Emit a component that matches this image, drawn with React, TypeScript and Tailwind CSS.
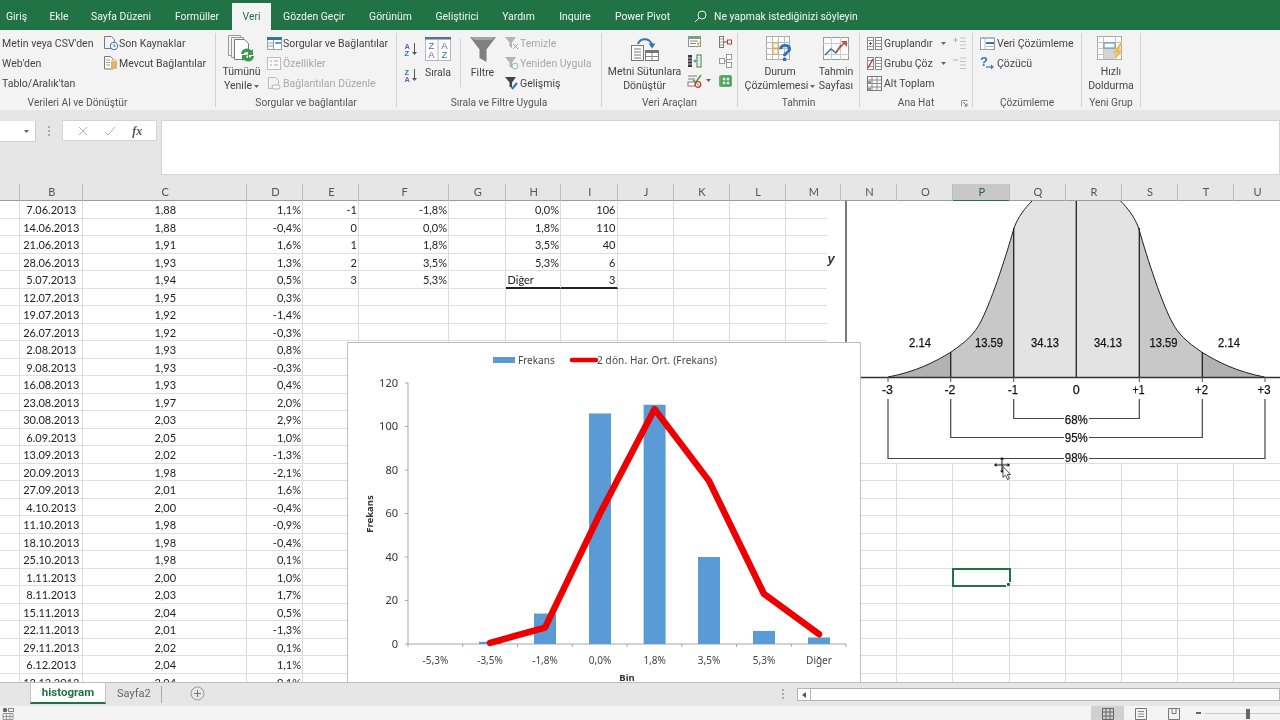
import React from "react";

const COLS =
  "grid grid-cols-[20px_62.5px_164.5px_56px_56px_90px_56.5px_55.5px_56.5px_56px_56px_56px_55.5px_56px_56px_56.5px_56px_56px_56px_56px_47px]";

const S = ({ w, h, children }: { w: number; h: number; children?: React.ReactNode }) => (
  <svg width={w} height={h} viewBox={`0 0 ${w} ${h}`} fill="none" className="block shrink-0">
    {children}
  </svg>
);

const TABS: [string, string][] = [
  ["Giriş", "w-[38px] pl-[6px] text-left"],
  ["Ekle", "w-[42px] text-center"],
  ["Sayfa Düzeni", "w-[82px] text-center"],
  ["Formüller", "w-[70px] text-center"],
  ["Veri", "w-[39px] text-center"],
  ["Gözden Geçir", "w-[86px] text-center"],
  ["Görünüm", "w-[67px] text-center"],
  ["Geliştirici", "w-[66px] text-center"],
  ["Yardım", "w-[57px] text-center"],
  ["Inquire", "w-[56px] text-center"],
  ["Power Pivot", "w-[79px] text-center"],
];

const blue = "#2f75b5";

const IcoRecent = () => (
  <S w={16} h={16}>
    <path d="M1.5 1.5h7l3 3v9h-10z" stroke="#777" />
    <circle cx="11" cy="11" r="3.7" fill="#fff" stroke={blue} />
    <path d="M11 9v2.2h1.8" stroke={blue} />
  </S>
);
const IcoExisting = () => (
  <S w={16} h={16}>
    <path d="M1.5 1.5h6l2.5 2.5v10h-8.500z" fill="#fff" stroke="#777" />
    <path d="M3 5h4M3 7.500h4M3 10h4" stroke="#999" />
    <rect x="8" y="5" width="6" height="9" rx="1.500" fill="#e9b063" />
    <ellipse cx="11" cy="5.500" rx="3" ry="1.300" fill="#f3cf94" />
  </S>
);
const IcoRefresh = () => (
  <S w={30} h={29}>
    <path d="M1.500 1.500h12v20h-12z" fill="#f3f3f3" stroke="#999" />
    <path d="M4.500 3.500h12v20h-12z" fill="#f3f3f3" stroke="#999" />
    <path d="M7.500 5.500h10l4 4v16h-14z" fill="#fff" stroke="#777" />
    <path d="M14 20a6 6 0 0 1 10.500-3.500l1.500-1.500v6h-6l2-2a3.500 3.500 0 0 0-5.500 1z" fill="#3d9a4b" />
    <path d="M27 22a6 6 0 0 1-10.500 3.500L15 27v-6h6l-2 2a3.500 3.500 0 0 0 5.500-1z" fill="#3d9a4b" />
  </S>
);
const IcoQueries = () => (
  <S w={15} h={13}>
    <rect x="0.500" y="0.500" width="14" height="12" fill="#fff" stroke="#8aa" />
    <rect x="0" y="0" width="15" height="3" fill={blue} />
    <path d="M1 6h5M1 9h5M6.500 3v9M9 6h5" stroke="#999" />
    <rect x="8" y="5" width="6" height="2" fill={blue} opacity=".6" />
  </S>
);
const IcoProps = () => (
  <S w={14} h={13}>
    <rect x="0.500" y="0.500" width="13" height="12" fill="#fafafa" stroke="#bdbdbd" />
    <path d="M3 4h2M7 4h4M3 8h2M7 8h4" stroke="#a9a9a9" />
  </S>
);
const IcoEditLinks = () => (
  <S w={14} h={14}>
    <path d="M1.500 1.500h7l3 3v8h-10z" stroke="#bcbcbc" />
    <rect x="5" y="9" width="8" height="4" rx="2" fill="#fafafa" stroke="#a7b3bd" />
  </S>
);
const IcoAZ = ({ rev }: { rev?: boolean }) => (
  <S w={14} h={14}>
    <text x="0.500" y="6.500" fontSize="7.500" fontWeight="700" fontFamily="Liberation Sans" fill={rev ? "#2f75b5" : "#7c5aa6"}>
      {rev ? "Z" : "A"}
    </text>
    <text x="0.500" y="13.500" fontSize="7.500" fontWeight="700" fontFamily="Liberation Sans" fill={rev ? "#7c5aa6" : "#2f75b5"}>
      {rev ? "A" : "Z"}
    </text>
    <path d="M10.500 1v10" stroke="#555" />
    <path d="M8 10l2.500 3 2.500-3z" fill="#555" />
  </S>
);
const IcoSort = () => (
  <S w={26} h={24}>
    <rect x="0.500" y="0.500" width="25" height="23" fill="#fdfdfd" stroke="#b7b7b7" />
    <rect x="0" y="0" width="26" height="2.500" fill="#5c6f8f" />
    <path d="M13 2v22" stroke="#b7b7b7" />
    <text x="6.500" y="12" textAnchor="middle" fontSize="9.500" fontFamily="Liberation Sans" fill="#2f75b5">Z</text>
    <text x="6.500" y="21" textAnchor="middle" fontSize="9.500" fontFamily="Liberation Sans" fill="#7c5aa6">A</text>
    <text x="19.500" y="12" textAnchor="middle" fontSize="9.500" fontFamily="Liberation Sans" fill="#7c5aa6">A</text>
    <text x="19.500" y="21" textAnchor="middle" fontSize="9.500" fontFamily="Liberation Sans" fill="#2f75b5">Z</text>
  </S>
);
const IcoFunnel = () => (
  <S w={26} h={25}>
    <path d="M0 0h26L16.500 12.500V25L9.500 21V12.500z" fill="#808080" />
    <path d="M1 0h24l-3 3H4z" fill="#a3a3a3" />
  </S>
);
const MiniFunnel = ({ color, children }: { color: string; children?: React.ReactNode }) => (
  <S w={16} h={15}>
    <path d="M1 1h11L8 6.500V12L5.500 10.500V6.500z" fill={color} />
    {children}
  </S>
);
const IcoText2Col = () => (
  <S w={28} h={24}>
    <rect x="0.500" y="8.500" width="12" height="15" fill="#fff" stroke="#777" />
    <path d="M3 12h7M3 15h7M3 18h7M3 21h7" stroke="#777" />
    <rect x="14.500" y="13.500" width="13" height="10" fill="#fff" stroke="#777" />
    <rect x="14.500" y="13.500" width="13" height="2.500" fill="#777" />
    <path d="M21 16v7M15 19.500h12" stroke="#888" />
    <path d="M7 7C9 1.500 17 0 21 7" stroke={blue} strokeWidth="2" />
    <path d="M17.500 6.500h7l-3.500 5z" fill={blue} />
  </S>
);
const IcoGrid14 = ({ kind }: { kind: number }) => (
  <S w={15} h={14}>
    {kind === 0 && (
      <>
        <rect x="1.500" y="1.500" width="12" height="10" fill="#fff" stroke="#8a9a8a" />
        <rect x="1.500" y="1.500" width="12" height="2.500" fill="#7ea07e" />
        <path d="M3 6h8M3 8.500h6" stroke="#888" />
        <path d="M10 8l3-1-2 5z" fill="#e5a93c" />
      </>
    )}
    {kind === 1 && (
      <>
        <rect x="1" y="1" width="4" height="12" fill="#3c3c3c" />
        <rect x="10" y="1" width="4" height="12" fill="#fff" stroke="#3d7a4a" />
        <path d="M1 4h4M1 7h4M1 10h4M10 4h4M10 7h4M10 10h4" stroke="#bbb" />
        <path d="M6.500 7h3M8 5.500v3" stroke={blue} />
      </>
    )}
    {kind === 2 && (
      <>
        <path d="M1 2h9M1 5h7" stroke="#7c7c7c" />
        <rect x="1" y="8" width="7" height="4" stroke="#7c7c7c" fill="#fff" />
        <path d="M6 6l3 2 5-7" stroke="#4a9b56" strokeWidth="1.500" />
        <circle cx="11" cy="10.500" r="2.800" fill="#fff" stroke="#c0392b" strokeWidth="1.200" />
        <path d="M9.200 8.800l3.600 3.600" stroke="#c0392b" />
      </>
    )}
    {kind === 3 && (
      <>
        <rect x="1.500" y="1.500" width="4" height="11" fill="#fff" stroke="#777" />
        <path d="M1.500 4h4M1.500 7h4M1.500 10h4" stroke="#999" />
        <path d="M6 7h3" stroke="#555" />
        <rect x="9.500" y="5" width="4" height="4" fill="#fff" stroke="#c0392b" />
      </>
    )}
    {kind === 4 && (
      <>
        <rect x="1.500" y="4.500" width="5" height="5" fill="#fff" stroke="#999" />
        <rect x="8.500" y="0.500" width="5" height="5" fill="#fff" stroke="#999" />
        <rect x="8.500" y="8.500" width="5" height="5" fill="#fff" stroke="#999" />
        <path d="M6.500 7h2M8.500 3v8" stroke="#999" />
      </>
    )}
    {kind === 5 && (
      <>
        <rect x="1" y="1" width="13" height="12" rx="2" fill="#5fb36b" />
        <rect x="4" y="3" width="8" height="8" fill="#cfe8d3" stroke="#3d8a4a" />
        <path d="M4 7h8M8 3v8" stroke="#3d8a4a" />
      </>
    )}
  </S>
);
const IcoWhatIf = () => (
  <S w={28} h={26}>
    <rect x="0.500" y="0.500" width="23" height="23" fill="#fbfbfb" stroke="#aaa" />
    <path d="M0 6.500h24M0 12.500h24M0 18.500h24M6.500 0v24M12.500 0v24M18.500 0v24" stroke="#bbb" />
    <rect x="7" y="7" width="5" height="5" fill="#fff" stroke="#d8a85a" />
    <rect x="7" y="13" width="5" height="5" fill="#fff" stroke="#d8a85a" />
    <text x="19" y="25" textAnchor="middle" fontSize="24" fontWeight="700" fontFamily="Liberation Sans" fill="#2f75b5">?</text>
  </S>
);
const IcoForecast = () => (
  <S w={26} h={24}>
    <rect x="0.500" y="0.500" width="25" height="22" fill="#fbfbfb" stroke="#999" />
    <path d="M0 6.500h26M0 17.500h26M8.500 0v23M17.500 0v23" stroke="#ccc" />
    <path d="M2 18l6-6 5 4 5-8" stroke="#2f75b5" strokeWidth="1.500" />
    <path d="M13 15l9-10" stroke="#c8553d" strokeWidth="1.800" />
    <path d="M18 4h6v6z" fill="#c8553d" />
  </S>
);
const IcoGroup = ({ un }: { un?: boolean }) => (
  <S w={15} h={13}>
    <rect x="0.500" y="0.500" width="6" height="12" fill="#fff" stroke="#888" />
    <rect x="8.500" y="0.500" width="6" height="12" fill="#fff" stroke="#888" />
    <path d="M8.500 3.500h6M8.500 6.500h6M8.500 9.500h6M.5 3.500h6M.5 9.500h6" stroke="#999" />
    {un ? (
      <path d="M1 11L6 2" stroke="#c0392b" strokeWidth="1.500" />
    ) : (
      <path d="M2 6.500h3M3.500 5v3" stroke="#2f6f8f" />
    )}
  </S>
);
const IcoSubtotal = () => (
  <S w={15} h={15}>
    <rect x="0.500" y="0.500" width="14" height="14" fill="#fff" stroke="#777" />
    <path d="M.5 4h14M.5 7.500h14M.5 11h14M5 0v15M10 0v15" stroke="#888" />
    <path d="M1 6h3M1 13h3" stroke="#333" />
  </S>
);
const IcoOutline = ({ plus }: { plus?: boolean }) => (
  <S w={14} h={13}>
    <path d={plus ? "M0 3h5M2.500 .5v5" : "M0 3h5"} stroke="#b5b5b5" />
    <path d="M7 1h6M7 4.500h6M7 8h6M7 11.500h6" stroke="#c4c4c4" />
  </S>
);
const Caret = () => (
  <svg width="5" height="3" viewBox="0 0 5 3" className="shrink-0">
    <path d="M0 0h5L2.500 3z" fill="#666" />
  </svg>
);
const IcoAnalysis = () => (
  <S w={15} h={13}>
    <rect x="0.500" y="0.500" width="14" height="12" fill="#fff" stroke="#999" />
    <rect x="0" y="0" width="15" height="2" fill="#aab8c8" />
    <path d="M5 2v11" stroke="#bbb" />
    <path d="M6 6h8" stroke={blue} strokeWidth="2" />
    <path d="M6 9.500h8" stroke="#bbb" />
  </S>
);
const IcoSolver = () => (
  <S w={15} h={14}>
    <text x="0" y="10" fontSize="13" fontWeight="700" fontFamily="Liberation Sans" fill="#2f75b5">?</text>
    <path d="M6 11h6" stroke="#3a7abf" strokeWidth="1.300" />
    <path d="M11 8.500l3 2.500-3 2.500z" fill="#3a7abf" />
  </S>
);
const IcoFlash = () => (
  <S w={28} h={26}>
    <rect x="0.500" y="0.500" width="24" height="23" fill="#fbfbfb" stroke="#aaa" />
    <path d="M0 6.500h25M0 12.500h25M0 18.500h25M6.500 0v24M18.500 0v24" stroke="#c4c4c4" />
    <rect x="7" y="7" width="11" height="5" fill="#fff" stroke="#5a8aa0" />
    <rect x="7" y="13" width="11" height="10" fill="#d4d4d4" />
    <path d="M23 7l-7 10h4l-3 8 9-11h-4l3-7z" fill="#f0bd54" />
  </S>
);
const Launcher = () => (
  <S w={7} h={7}>
    <path d="M.5 6.500v-6h6" stroke="#999" />
    <path d="M2 2l4 4M6 3.500V6H3.500" stroke="#777" />
  </S>
);

const Small = ({ icon, label, off, cls = "" }: { icon: React.ReactNode; label: string; off?: boolean; cls?: string }) => (
  <div className={`flex items-center h-5 whitespace-nowrap ${off ? "text-[#a8a8a8]" : "text-[#444]"} ${cls}`}>
    {icon}
    <span className="pt-[2px]">{label}</span>
  </div>
);

const Big = ({ icon, l1, l2, w, caret }: { icon: React.ReactNode; l1: string; l2?: string; w: string; caret?: boolean }) => (
  <div className={`flex flex-col items-center shrink-0 ${w}`}>
    <div className="h-[33px] flex items-center justify-center pb-px">{icon}</div>
    <div className="leading-[14px] whitespace-nowrap text-[#444]">{l1}</div>
    {l2 && (
      <div className="leading-[14px] whitespace-nowrap text-[#444] flex items-center gap-[2px]">
        {l2}
        {caret && <Caret />}
      </div>
    )}
  </div>
);

const Group = ({ w, label, children, launcher, lcls = "" }: { w: string; label: string; children: React.ReactNode; launcher?: boolean; lcls?: string }) => (
  <div className={`${w} h-[74px] flex flex-col shrink-0 border-r border-[#d2d2d2]`}>
    <div className="h-[60px] flex">{children}</div>
    <div className={`h-[14px] pt-[7px] flex items-center justify-center relative text-[10.2px] leading-none text-[#555] whitespace-nowrap ${lcls}`}>
      {label}
      {launcher && (
        <span className="absolute right-[4px] top-[7px]">
          <Launcher />
        </span>
      )}
    </div>
  </div>
);

const HEAD = ["", "B", "C", "D", "E", "F", "G", "H", "I", "J", "K", "L", "M", "N", "O", "P", "Q", "R", "S", "T", "U"];

const RAW = `7.06.2013 1,88 1,1%|14.06.2013 1,88 -0,4%|21.06.2013 1,91 1,6%|28.06.2013 1,93 1,3%|5.07.2013 1,94 0,5%|12.07.2013 1,95 0,3%|19.07.2013 1,92 -1,4%|26.07.2013 1,92 -0,3%|2.08.2013 1,93 0,8%|9.08.2013 1,93 -0,3%|16.08.2013 1,93 0,4%|23.08.2013 1,97 2,0%|30.08.2013 2,03 2,9%|6.09.2013 2,05 1,0%|13.09.2013 2,02 -1,3%|20.09.2013 1,98 -2,1%|27.09.2013 2,01 1,6%|4.10.2013 2,00 -0,4%|11.10.2013 1,98 -0,9%|18.10.2013 1,98 -0,4%|25.10.2013 1,98 0,1%|1.11.2013 2,00 1,0%|8.11.2013 2,03 1,7%|15.11.2013 2,04 0,5%|22.11.2013 2,01 -1,3%|29.11.2013 2,02 0,1%|6.12.2013 2,04 1,1%|13.12.2013 2,04 0,1%`;
const ROWS = RAW.split("|").map((r) => r.split(" "));
const EXTRA: Record<number, { e: string; f: string; h: string; i: string }> = {
  0: { e: "-1", f: "-1,8%", h: "0,0%", i: "106" },
  1: { e: "0", f: "0,0%", h: "1,8%", i: "110" },
  2: { e: "1", f: "1,8%", h: "3,5%", i: "40" },
  3: { e: "2", f: "3,5%", h: "5,3%", i: "6" },
  4: { e: "3", f: "5,3%", h: "Diğer", i: "3" },
};

function Cell({ r, c }: { r: number; c: number }) {
  const row = ROWS[r];
  const x = EXTRA[r];
  let text = "";
  let align = "text-right pr-[1px]";
  if (c === 1) {
    text = row[0];
    align = "text-center pl-px";
  } else if (c === 2) {
    text = row[1];
    align = "text-center pl-[2px]";
  } else if (c === 3) text = row[2];
  else if (x && c === 4) text = x.e;
  else if (x && c === 5) text = x.f;
  else if (x && c === 7) {
    text = x.h;
    if (r === 4) align = "text-left pl-[2px]";
  } else if (x && c === 8) text = x.i;
  const thick = r === 4 && (c === 7 || c === 8);
  const selected = r === 21 && c === 15;
  return (
    <div
      className={`border-r border-[#dcdcdc] whitespace-nowrap leading-[17px] overflow-hidden ${align} ${
        thick ? "border-b-2 border-b-[#222]" : "border-b border-b-[#dedede]"
      } ${selected ? "relative overflow-visible outline-2 -outline-offset-1 outline-[#217346]" : ""}`}
    >
      {text}
      {selected && <span className="absolute -right-[2px] -bottom-[2px] w-[5px] h-[5px] bg-[#217346] border border-white" />}
    </div>
  );
}

const CX = [435.4, 490, 545, 600, 654.6, 709, 764, 819];
const Y0 = 644;
const yOf = (v: number) => Y0 - v * 2.175;

function Chart() {
  const bars = [0, 1, 14, 106, 110, 40, 6, 3];
  const line = [0.5, 7.5, 60, 108, 75, 23, 4.5];
  const lbls = ["-5,3%", "-3,5%", "-1,8%", "0,0%", "1,8%", "3,5%", "5,3%", "Diğer"];
  return (
    <svg width="512" height="345" viewBox="348 343 512 345" className="block" fontFamily="Noto Sans, sans-serif">
      <rect x="493" y="357" width="22" height="6" fill="#5b9bd5" />
      <text x="518" y="363.500" fontSize="10" fill="#444">Frekans</text>
      <path d="M572 360h24" stroke="#ee0000" strokeWidth="4.500" strokeLinecap="round" />
      <text x="597" y="363.500" fontSize="10" fill="#444" textLength="120" lengthAdjust="spacing">2 dön. Har. Ort. (Frekans)</text>
      <path d="M408 383V644H846" stroke="#a6a6a6" fill="none" />
      {[0, 20, 40, 60, 80, 100, 120].map((v) => (
        <g key={v}>
          <path d={`M405 ${yOf(v)}h3`} stroke="#a6a6a6" />
          <text x="398" y={yOf(v) + 3.500} textAnchor="end" fontSize="11" fill="#333">{v}</text>
        </g>
      ))}
      {Array.from({ length: 9 }).map((_, i) => (
        <path key={i} d={`M${408 + i * 54.75} 644v3`} stroke="#a6a6a6" />
      ))}
      {bars.map((b, i) =>
        b ? <rect key={i} x={CX[i] - 11} y={yOf(b)} width="22" height={b * 2.175} fill="#5b9bd5" /> : null
      )}
      <polyline
        points={line.map((v, i) => `${CX[i + 1]},${yOf(v)}`).join(" ")}
        fill="none"
        stroke="#ee0000"
        strokeWidth="6.500"
        strokeLinejoin="round"
        strokeLinecap="round"
      />
      {lbls.map((l, i) => (
        <text key={l} x={CX[i]} y="663.500" textAnchor="middle" fontSize="10" fill="#444">{l}</text>
      ))}
      <text x="627" y="681" textAnchor="middle" fontSize="9.500" fontWeight="700" fill="#333">Bin</text>
      <text transform="translate(373 514) rotate(-90)" textAnchor="middle" fontSize="9.500" fontWeight="700" fill="#333">Frekans</text>
    </svg>
  );
}

const M = 2152.6;
const half = (f: (x: number) => number) =>
  `M${f(888)},377 C${f(915)},372 ${f(935)},362 ${f(951)},352 C${f(966)},342 ${f(975)},333 ${f(980)},323 C${f(990)},305 ${f(1005)},260 ${f(1014)},228 C${f(1018)},217 ${f(1025)},208 ${f(1032)},201`;
const leftC = half((x) => x);
const rightC = half((x) => M - x);

function Bell() {
  const tlabel = (x: number, t: string, w: number, y = 347) => (
    <text x={x} y={y} textAnchor="middle" fontSize="13.500" fill="#111" stroke="#111" strokeWidth="0.250" textLength={w} lengthAdjust="spacingAndGlyphs">
      {t}
    </text>
  );
  return (
    <svg width="453" height="262" viewBox="827 201 453 262" className="block" fontFamily="Liberation Sans, sans-serif">
      <defs>
        <clipPath id="bellClip">
          <path d={`${leftC} L1121,201 C1128,208 1135,217 1139,228 C1148,260 1163,305 1173,323 C1178,333 1187,342 1202,352 C1218,362 1238,372 1265,377 Z`} />
        </clipPath>
      </defs>
      <g clipPath="url(#bellClip)">
        <rect x="888" y="201" width="63" height="177" fill="#b2b2b2" />
        <rect x="951" y="201" width="63" height="177" fill="#c8c8c8" />
        <rect x="1014" y="201" width="125" height="177" fill="#e3e3e3" />
        <rect x="1139" y="201" width="63" height="177" fill="#c8c8c8" />
        <rect x="1202" y="201" width="63" height="177" fill="#b2b2b2" />
      </g>
      <path d={leftC} stroke="#222" fill="none" />
      <path d={rightC} stroke="#222" fill="none" />
      <path d="M846 201V343" stroke="#7a7a7a" strokeWidth="2" />
      <path d="M860 377.500H1280" stroke="#333" strokeWidth="1.300" />
      <path d="M950.700 352V377M1013.700 228V377M1076.300 201V377M1139.300 228V377M1202.300 352V377" stroke="#222" strokeWidth="1.300" />
      <path d="M888 377v5M950.700 377v5M1013.700 377v5M1139.300 377v5M1202.300 377v5M1265 377v5" stroke="#555" />
      <path d="M1013.700 399V418.500H1064M1089 418.500H1139.300V399" stroke="#444" strokeWidth="1.200" fill="none" />
      <path d="M950.700 399V437.500H1064M1089 437.500H1202.300V399" stroke="#444" strokeWidth="1.200" fill="none" />
      <path d="M888 399V458.500H1064M1089 458.500H1265V399" stroke="#444" strokeWidth="1.200" fill="none" />
      {tlabel(920, "2.14", 22)}
      {tlabel(989, "13.59", 28)}
      {tlabel(1045, "34.13", 28)}
      {tlabel(1108, "34.13", 28)}
      {tlabel(1163.500, "13.59", 28)}
      {tlabel(1229, "2.14", 22)}
      {tlabel(887.500, "-3", 11, 394)}
      {tlabel(950, "-2", 11, 394)}
      {tlabel(1013, "-1", 10, 394)}
      {tlabel(1076.300, "0", 7, 394)}
      {tlabel(1138.500, "+1", 12, 394)}
      {tlabel(1201.500, "+2", 13, 394)}
      {tlabel(1264, "+3", 13, 394)}
      {tlabel(1076.300, "68%", 23, 423.500)}
      {tlabel(1076.300, "95%", 23, 441.500)}
      {tlabel(1076.300, "98%", 23, 461.500)}
      <text x="827.500" y="263" fontSize="13" fontWeight="700" fontStyle="italic" fill="#333">y</text>
    </svg>
  );
}

const Cursor = () => (
  <svg width="18" height="24" viewBox="0 0 18 24" className="block">
    <path d="M8 1v14M1 8h14" stroke="#111" />
    <path d="M8 0L6 2.500h4zM8 16l-2-2.500h4zM0 8l2.500-2v4zM16 8l-2.500-2v4z" fill="#111" />
    <path d="M9 9.500v11l2.500-2.300 2 4.300 1.800-.8-2-4.200h3.200z" fill="#fff" stroke="#222" strokeWidth=".8" />
  </svg>
);

export default function App() {
  return (
    <div className="w-[1280px] h-[720px] overflow-hidden flex flex-col bg-[#e6e6e6] font-['Roboto',sans-serif] text-[10.5px] blur-[0.4px]">
      {/* tabs */}
      <div className="h-[30px] shrink-0 bg-[#217346] flex pt-[3px] text-[10.4px] text-[#f2f7f4] leading-[27px]">
        {TABS.map(([t, c]) => (
          <div key={t} className={`${c} ${t === "Veri" ? "bg-[#f3f3f3] text-[#217346]" : ""}`}>
            {t}
          </div>
        ))}
        <div className="flex items-center ml-[12px] gap-[7px] pb-[1px]">
          <svg width="13" height="13" viewBox="0 0 13 13" fill="none">
            <circle cx="8" cy="5" r="4" stroke="#eaf2ed" />
            <path d="M5 8l-4 4" stroke="#eaf2ed" />
          </svg>
          <span>Ne yapmak istediğinizi söyleyin</span>
        </div>
      </div>
      {/* ribbon */}
      <div className="h-[80px] shrink-0 bg-[#f3f3f3] pt-[3px] flex">
        <Group w="w-[216px]" label="Verileri Al ve Dönüştür" lcls="pr-[60px]">
          <div className="w-[103px] pl-[2px] shrink-0">
            <Small icon={null} label="Metin veya CSV'den" />
            <Small icon={null} label="Web'den" />
            <Small icon={null} label="Tablo/Aralık'tan" />
          </div>
          <div className="flex flex-col">
            <Small icon={<IcoRecent />} label="Son Kaynaklar" />
            <Small icon={<IcoExisting />} label="Mevcut Bağlantılar" />
          </div>
        </Group>
        <Group w="w-[181px]" label="Sorgular ve bağlantılar">
          <Big w="w-[51px]" icon={<IcoRefresh />} l1="Tümünü" l2="Yenile" caret />
          <div>
            <Small icon={<span className="mr-[1px]"><IcoQueries /></span>} label="Sorgular ve Bağlantılar" />
            <Small off icon={<span className="mr-[2px]"><IcoProps /></span>} label="Özellikler" />
            <Small off icon={<span className="mr-[2px]"><IcoEditLinks /></span>} label="Bağlantıları Düzenle" />
          </div>
        </Group>
        <Group w="w-[205px]" label="Sırala ve Filtre Uygula">
          <div className="w-[28px] pl-[7px] pt-[9px] flex flex-col gap-[12px] shrink-0">
            <IcoAZ />
            <IcoAZ rev />
          </div>
          <div className="w-[35px] shrink-0">
            <Big w="w-[26px]" icon={<IcoSort />} l1="Sırala" />
          </div>
          <div className="w-px h-[49px] mt-[5px] bg-[#d2d2d2] shrink-0" />
          <Big w="w-[43px]" icon={<IcoFunnel />} l1="Filtre" />
          <div>
            <Small off icon={<MiniFunnel color="#b3b3b3"><path d="M9 8l5 5M14 8l-5 5" stroke="#a0a0a0" /></MiniFunnel>} label="Temizle" />
            <Small off icon={<MiniFunnel color="#b3b3b3"><circle cx="11" cy="10" r="3" stroke="#8fc09a" /></MiniFunnel>} label="Yeniden Uygula" />
            <Small icon={<MiniFunnel color="#444"><path d="M8 13l5-6" stroke="#2f75b5" strokeWidth="2" /></MiniFunnel>} label="Gelişmiş" />
          </div>
        </Group>
        <Group w="w-[136px]" label="Veri Araçları">
          <Big w="w-[85px]" icon={<IcoText2Col />} l1="Metni Sütunlara" l2="Dönüştür" />
          <div className="flex flex-col pt-[2px]">
            <div className="h-5"><IcoGrid14 kind={0} /></div>
            <div className="h-5"><IcoGrid14 kind={1} /></div>
            <div className="h-5 flex gap-[4px]"><IcoGrid14 kind={2} /><span className="pt-[5px]"><Caret /></span></div>
          </div>
          <div className="flex flex-col pt-[2px] ml-[7px]">
            <div className="h-5"><IcoGrid14 kind={3} /></div>
            <div className="h-5"><IcoGrid14 kind={4} /></div>
            <div className="h-5"><IcoGrid14 kind={5} /></div>
          </div>
        </Group>
        <Group w="w-[122px]" label="Tahmin">
          <div className="w-[5px] shrink-0" />
          <Big w="w-[74px]" icon={<IcoWhatIf />} l1="Durum" l2="Çözümlemesi" caret />
          <Big w="w-[38px]" icon={<IcoForecast />} l1="Tahmin" l2="Sayfası" />
        </Group>
        <Group w="w-[113px]" label="Ana Hat" launcher>
          <div className="pl-[7px] w-[81px] shrink-0">
            <Small icon={<span className="mr-[2px]"><IcoGroup /></span>} label="Gruplandır" />
            <Small icon={<span className="mr-[2px]"><IcoGroup un /></span>} label="Grubu Çöz" />
            <Small icon={<span className="mr-[2px]"><IcoSubtotal /></span>} label="Alt Toplam" />
          </div>
          <div className="flex flex-col">
            <div className="h-5 flex items-center gap-[7px]"><Caret /><IcoOutline plus /></div>
            <div className="h-5 flex items-center gap-[7px]"><Caret /><IcoOutline /></div>
          </div>
        </Group>
        <Group w="w-[109px]" label="Çözümleme">
          <div className="pl-[7px]">
            <Small icon={<span className="mr-[2px]"><IcoAnalysis /></span>} label="Veri Çözümleme" />
            <Small icon={<span className="mr-[2px]"><IcoSolver /></span>} label="Çözücü" />
          </div>
        </Group>
        <Group w="w-[59px]" label="Yeni Grup">
          <Big w="w-[58px]" icon={<IcoFlash />} l1="Hızlı" l2="Doldurma" />
        </Group>
      </div>
      {/* formula bar */}
      <div className="h-[74px] shrink-0 flex items-start pt-[10px] pb-[9px] bg-[#e6e6e6]">
        <div className="w-[36px] h-[21px] mt-[1px] bg-white border-r border-b border-[#cfcfcf] flex items-center justify-end pr-[6px] shrink-0">
          <Caret />
        </div>
        <div className="w-[26px] h-[21px] flex flex-col items-center justify-center gap-[2px] shrink-0 pr-[1px]">
          <i className="w-[2px] h-[2px] bg-[#aaa]" />
          <i className="w-[2px] h-[2px] bg-[#aaa]" />
          <i className="w-[2px] h-[2px] bg-[#aaa]" />
        </div>
        <div className="w-[95px] h-[21px] bg-white border border-[#d4d4d4] flex items-center justify-around px-[6px] shrink-0">
          <svg width="12" height="12" viewBox="0 0 12 12" fill="none"><path d="M2 2l8 8M10 2l-8 8" stroke="#b3b3b3" /></svg>
          <svg width="12" height="12" viewBox="0 0 12 12" fill="none"><path d="M1 7l3 3 7-8" stroke="#b3b3b3" /></svg>
          <span className="font-['Liberation_Serif',serif] italic font-bold text-[#555] text-[12px] leading-none">fx</span>
        </div>
        <div className="ml-[4px] flex-1 h-[55px] bg-white border border-[#d4d4d4]" />
      </div>
      {/* column header */}
      <div className={`${COLS} h-[17px] shrink-0 bg-[#e6e6e6] border-b border-[#9c9c9c] text-[#555] text-[11px] leading-[16px] font-['Lato',sans-serif]`}>
        {HEAD.map((h, i) => (
          <div
            key={i}
            className={`text-center pl-[2px] border-r border-[#bcbcbc] ${h === "P" ? "bg-[#c8c8c8] text-[#1d6b40] border-b-2 border-b-[#217346]" : ""}`}
          >
            {h}
          </div>
        ))}
      </div>
      {/* sheet */}
      <div className="h-[481px] shrink-0 relative overflow-hidden bg-white">
        <div className={`${COLS} auto-rows-[17.5px] font-['Lato',sans-serif] text-[11px] text-[#222]`}>
          {ROWS.map((_, r) => HEAD.map((__, c) => <Cell key={`${r}-${c}`} r={r} c={c} />))}
        </div>
        <div className="absolute left-[827px] top-0 bg-white">
          <Bell />
        </div>
        <div className="absolute left-[347px] top-[141px] w-[514px] h-[347px] bg-white border border-[#bdbdbd]">
          <Chart />
        </div>
        <div className="absolute left-[994px] top-[256px]">
          <Cursor />
        </div>
      </div>
      {/* sheet tabs */}
      <div className="h-[24px] shrink-0 bg-[#e6e6e6] border-t border-[#bdbdbd] flex items-start">
        <div className="ml-[30px] w-[76px] h-[21px] bg-white border-x border-b-2 border-[#c4c4c4] border-b-[#217346] text-center font-bold text-[11.5px] leading-[19px] text-[#217346] shrink-0">
          histogram
        </div>
        <div className="ml-[11px] w-[44px] text-[11px] leading-[21px] text-[#666] shrink-0">Sayfa2</div>
        <div className="w-px h-[17px] mt-[3px] bg-[#aaa] shrink-0" />
        <div className="ml-[28px] mt-[3px] shrink-0">
          <svg width="15" height="15" viewBox="0 0 15 15" fill="none">
            <circle cx="7.500" cy="7.500" r="6.500" stroke="#9a9a9a" />
            <path d="M4 7.500h7M7.500 4v7" stroke="#777" />
          </svg>
        </div>
        <div className="ml-[577px] w-[2px] h-[10px] mt-[6px] flex flex-col justify-between shrink-0">
          <i className="block w-[2px] h-[2px] bg-[#aaa]" />
          <i className="block w-[2px] h-[2px] bg-[#aaa]" />
          <i className="block w-[2px] h-[2px] bg-[#aaa]" />
        </div>
        <div className="ml-[13px] mt-[5px] flex-1 h-[13px] flex bg-white border border-[#b5b5b5]">
          <div className="w-[13px] border-r border-[#b5b5b5] flex items-center justify-center">
            <svg width="4" height="6" viewBox="0 0 4 6"><path d="M4 0v6L0 3z" fill="#555" /></svg>
          </div>
        </div>
      </div>
      {/* status */}
      <div className="h-[14px] shrink-0 bg-[#f3f3f3] flex items-start">
        <div className="ml-[2px] mt-[1px] shrink-0">
          <svg width="12" height="13" viewBox="0 0 12 13" fill="none">
            <circle cx="3" cy="3" r="2.200" fill="#666" />
            <rect x="6.500" y="1.500" width="5" height="3" stroke="#888" />
            <path d="M1 6.500h10v6H1zM4.500 6.500v6M8 6.500v6M1 9.500h10" stroke="#999" />
          </svg>
        </div>
        <div className="ml-[1077px] w-[33px] h-[14px] bg-[#d0d0d0] flex justify-center pt-[2px] shrink-0">
          <svg width="12" height="12" viewBox="0 0 12 12" fill="none"><path d="M.5 .5h11v11H.5zM.5 4h11M.5 8h11M4 0v12M8 0v12" stroke="#666" /></svg>
        </div>
        <div className="w-[33px] flex justify-center pt-[2px] shrink-0">
          <svg width="12" height="12" viewBox="0 0 12 12" fill="none"><path d="M.5 .5h11v11H.5z" stroke="#777" /><path d="M3 3.500h6M3 6h6M3 8.500h6" stroke="#888" /></svg>
        </div>
        <div className="w-[33px] flex justify-center pt-[2px] shrink-0">
          <svg width="12" height="12" viewBox="0 0 12 12" fill="none"><path d="M.5 .5h11v11H.5zM4 .5v5h4v-5" stroke="#777" /></svg>
        </div>
        <div className="ml-[6px] mt-[6px] w-[5px] h-[2px] bg-[#666] shrink-0" />
        <div className="ml-[4px] flex-1 flex items-center h-[14px]">
          <div className="w-[41px] h-px bg-[#ccc]" />
          <div className="w-[4px] h-[10px] mt-[1px] bg-[#666]" />
          <div className="flex-1 h-px bg-[#ccc]" />
        </div>
      </div>
    </div>
  );
}
